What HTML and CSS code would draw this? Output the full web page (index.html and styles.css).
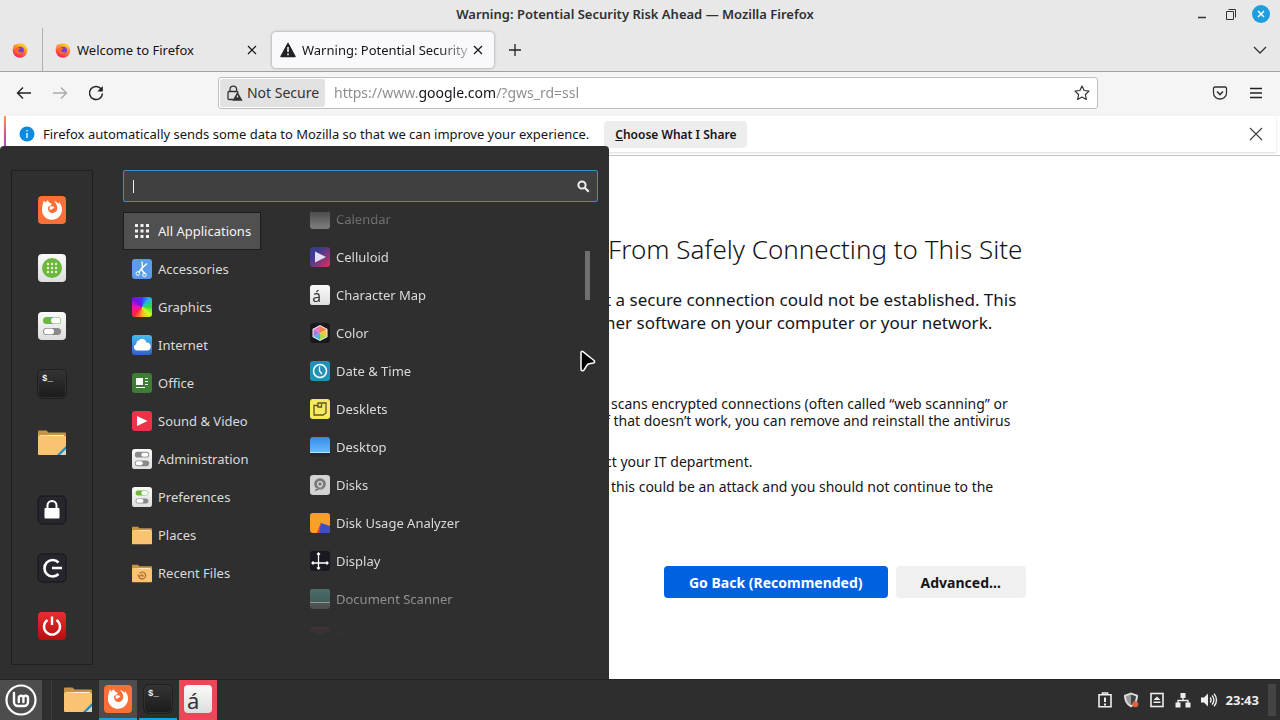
FILE: index.html
```html
<!DOCTYPE html>
<html lang="en">
  <head>
    <meta charset="UTF-8" />
    <meta name="viewport" content="width=device-width, initial-scale=1.0" />
    <title>Warning: Potential Security Risk Ahead — Mozilla Firefox</title>
    <link rel="stylesheet" href="styles.css">
  </head>
  <body>
    <svg class="sprite" width="0" height="0" aria-hidden="true">
      <defs>
        <linearGradient id="flame" x1="0.8" y1="0" x2="0.3" y2="1">
          <stop offset="0" stop-color="#ffe23e" />
          <stop offset="0.45" stop-color="#ff8a1f" />
          <stop offset="1" stop-color="#f5156c" />
        </linearGradient>
        <linearGradient id="white" x1="0" y1="0" x2="0" y2="1">
          <stop offset="0" stop-color="#fafafa" />
          <stop offset="1" stop-color="#dedede" />
        </linearGradient>
        <linearGradient id="dark" x1="0" y1="0" x2="0" y2="1">
          <stop offset="0" stop-color="#333333" />
          <stop offset="1" stop-color="#1c1c1c" />
        </linearGradient>
        <linearGradient id="sky" x1="0" y1="0" x2="0" y2="1">
          <stop offset="0" stop-color="#3689e6" />
          <stop offset="1" stop-color="#64baff" />
        </linearGradient>
        <linearGradient id="cloudsky" x1="0" y1="0" x2="0" y2="1">
          <stop offset="0" stop-color="#46bdf0" />
          <stop offset="1" stop-color="#2f62c8" />
        </linearGradient>
        <linearGradient id="film" x1="0" y1="0" x2="1" y2="1">
          <stop offset="0.3" stop-color="#3b3c96" />
          <stop offset="1" stop-color="#d8305c" />
        </linearGradient>
        <linearGradient id="red" x1="0" y1="0" x2="0" y2="1">
          <stop offset="0" stop-color="#e63030" />
          <stop offset="1" stop-color="#b80d10" />
        </linearGradient>
      </defs>
      <symbol id="ff-logo" viewBox="0 0 16 16">
        <circle cx="8" cy="8.500" r="7.300" fill="url(#flame)" />
        <path d="M10.500 0.300c0.500 2 4.700 3.500 4.800 8.200 0-1.500-2-4-4-5z" fill="#ffd83a" />
        <path d="M0.800 7C1 4.500 2 3 3 2l0.500 1.600 2.500 0.400z" fill="#ff8a3b" />
        <circle cx="8.300" cy="8.300" r="3.600" fill="#7a3fd0" />
        <path d="M3.500 6.500c2-1.500 3.500-0.500 5 0.200-1.600 0.300-1.500 1.300-2.500 1.700 0.500 2 3 2.500 5 0.800-0.800 2.800-3.500 3.600-5.500 2.600S3 8.500 3.500 6.500z" fill="#ff6a2b" />
      </symbol>
      <symbol id="close" viewBox="0 0 16 16">
        <path d="M4 4l8 8M12 4l-8 8" fill="none" stroke="currentColor" stroke-width="1.200" />
      </symbol>
      <symbol id="firefox" viewBox="0 0 28 28">
        <rect width="28" height="28" rx="4" fill="#f96f37" />
        <path d="M5 7.500C5 6.500 5.500 5.500 6 4.500l1.500 2.300C8 5.800 9.200 4.800 10 4c0 1.500 1 2.500 2 3l2 1-2 2c-1.500 0.200-2 1-2 2.500 0 2.600 2 4.500 4.300 4.500 3 0 5-2.200 5-5 0-3-1.500-5-3.300-7 2 0.500 3.500 1.500 4.500 3l0.500-2c2.200 2.500 3.200 5.300 3 8-0.300 5.500-4.500 9.800-10 9.800S4 19.500 4 14.200c0-2.500 0.300-4.800 1-6.700z" fill="#fff" />
        <path d="M12 10.500c1.500-0.500 2.500 0.500 4.500 0.500-1 1.500-2 1.500-3 2.500-1 0.800-2 0-2-1z" fill="#fff" />
      </symbol>
      <symbol id="apps" viewBox="0 0 28 28">
        <rect width="28" height="28" rx="4" fill="url(#white)" />
        <circle cx="14" cy="14" r="10" fill="#6cb83b" />
        <g fill="#e9f5df">
          <circle cx="10" cy="10" r="1.200" /><circle cx="14" cy="10" r="1.200" /><circle cx="18" cy="10" r="1.200" />
          <circle cx="10" cy="14" r="1.200" /><circle cx="14" cy="14" r="1.200" /><circle cx="18" cy="14" r="1.200" />
          <circle cx="10" cy="18" r="1.200" /><circle cx="14" cy="18" r="1.200" /><circle cx="18" cy="18" r="1.200" />
        </g>
      </symbol>
      <symbol id="settings" viewBox="0 0 28 28">
        <rect width="28" height="28" rx="4" fill="url(#white)" />
        <rect x="5" y="5" width="18" height="7" rx="3.500" fill="#6cb83b" />
        <rect x="13" y="5.500" width="9.500" height="6" rx="3" fill="#fff" />
        <rect x="5" y="16" width="18" height="7" rx="3.500" fill="#8a8a8a" />
        <rect x="6" y="16.800" width="10" height="5.400" rx="2.700" fill="#fff" />
      </symbol>
      <symbol id="admin" viewBox="0 0 28 28">
        <rect width="28" height="28" rx="4" fill="url(#white)" />
        <rect x="4" y="4" width="20" height="8" rx="4" fill="#8a8a8a" />
        <rect x="13" y="5.200" width="9.800" height="5.600" rx="2.800" fill="#fff" />
        <rect x="4" y="16" width="20" height="8" rx="4" fill="#8a8a8a" />
        <rect x="5.200" y="17.200" width="9.800" height="5.600" rx="2.800" fill="#fff" />
      </symbol>
      <symbol id="terminal" viewBox="0 0 28 28">
        <rect x="-0.500" y="-0.500" width="29" height="29" rx="5" fill="#111" />
        <rect x="0.500" y="0.500" width="27" height="27" rx="4" fill="url(#dark)" stroke="#484848" stroke-width="0.500" />
        <text x="4" y="10.500" font-family="Liberation Mono, monospace" font-size="9" font-weight="700" fill="#eee">$_</text>
      </symbol>
      <symbol id="folder" viewBox="0 0 28 28">
        <path d="M0 3.500a1 1 0 0 1 1-1h7.500l2 2H27a1 1 0 0 1 1 1V14H0z" fill="#c69345" />
        <path d="M2 7h24v4H2z" fill="#fff0d6" />
        <path d="M0 8.500a1 1 0 0 1 1-1h8L11 8h16a1 1 0 0 1 1 1v17a1 1 0 0 1-1 1H1a1 1 0 0 1-1-1z" fill="#f9c372" />
      </symbol>
      <symbol id="home" viewBox="0 0 28 28">
        <use href="#folder" width="28" height="28" />
        <path d="M19 27l9-9v8a1 1 0 0 1-1 1z" fill="#d5d5c4" />
        <path d="M19 27l9-9v3l-6 6z" fill="#1f87c0" />
      </symbol>
      <symbol id="recent" viewBox="0 0 28 28">
        <use href="#folder" width="28" height="28" />
        <path d="M10.500 14.500a4.800 4.800 0 1 1-1 3.500M8 16l1.700 3 2.800-2M14 15v3h2.500" fill="none" stroke="#a8682c" stroke-width="1.600" />
      </symbol>
      <symbol id="lock" viewBox="0 0 28 28">
        <rect x="-0.500" y="-0.500" width="29" height="29" rx="5" fill="#15151a" />
        <rect x="0.500" y="0.500" width="27" height="27" rx="4" fill="#27262d" />
        <path d="M9.500 13V9.500a4.500 4.500 0 0 1 9 0V13" fill="none" stroke="#fff" stroke-width="2" />
        <rect x="6.500" y="12" width="15" height="10.500" rx="1" fill="#fff" />
      </symbol>
      <symbol id="logout" viewBox="0 0 28 28">
        <rect x="-0.500" y="-0.500" width="29" height="29" rx="5" fill="#15151a" />
        <rect x="0.500" y="0.500" width="27" height="27" rx="4" fill="#27262d" />
        <path d="M20.500 8.500a8.200 8.200 0 1 0 0 11.500M14 14h10" fill="none" stroke="#fff" stroke-width="2.600" />
      </symbol>
      <symbol id="power" viewBox="0 0 28 28">
        <rect width="28" height="28" rx="4" fill="url(#red)" />
        <path d="M9.500 8a8 8 0 1 0 9 0M14 4.500v8.500" fill="none" stroke="#fff" stroke-width="2.400" />
      </symbol>
      <symbol id="charmap" viewBox="0 0 28 28">
        <rect width="28" height="28" rx="4" fill="url(#white)" />
        <text x="3" y="24" font-family="Noto Sans, sans-serif" font-size="22" fill="#333">á</text>
      </symbol>
      <symbol id="grid" viewBox="0 0 20 20">
        <path d="M3 3h3v3H3zM8.500 3h3v3h-3zM14 3h3v3h-3zM3 8.500h3v3H3zM8.500 8.500h3v3h-3zM14 8.500h3v3h-3zM3 14h3v3H3zM8.500 14h3v3h-3zM14 14h3v3h-3z" fill="#f2f2f2" />
      </symbol>
      <symbol id="accessories" viewBox="0 0 20 20">
        <rect width="20" height="20" rx="3" fill="#5b9cec" />
        <path d="M10 2.500L10.500 9l-4 4.500M15 4.500L9 10l4 5" stroke="#fff" stroke-width="1.400" fill="none" />
        <circle cx="5.800" cy="14.500" r="1.800" fill="none" stroke="#fff" />
        <circle cx="12.500" cy="15.800" r="1.800" fill="none" stroke="#fff" />
      </symbol>
      <symbol id="internet" viewBox="0 0 20 20">
        <rect width="20" height="20" rx="3" fill="url(#cloudsky)" />
        <path d="M5 15.500a3.200 3.200 0 0 1-0.600-6.300A3.600 3.600 0 0 1 7 5.200a4.200 4.200 0 0 1 7.300 2.300A4 4 0 0 1 15 15.500z" fill="#fff" />
      </symbol>
      <symbol id="office" viewBox="0 0 20 20">
        <rect width="20" height="20" rx="3" fill="#3d7d34" />
        <path d="M4 5h7v7H4zM13 5h3v1h-3zM13 8h3v1h-3zM13 11h3v1h-3zM4 14h9v1H4z" fill="#fff" />
      </symbol>
      <symbol id="video" viewBox="0 0 20 20">
        <rect width="20" height="20" rx="3" fill="#ee3148" />
        <path d="M5 5l10.500 5L5 15z" fill="#fff" />
      </symbol>
      <symbol id="calendar" viewBox="0 0 20 20">
        <rect width="20" height="20" rx="3" fill="#c8c8c8" />
      </symbol>
      <symbol id="celluloid" viewBox="0 0 20 20">
        <rect width="20" height="20" rx="3" fill="url(#film)" />
        <path d="M5 4.500L16 10 5 15.500z" fill="#e5e0f4" />
      </symbol>
      <symbol id="color" viewBox="0 0 20 20">
        <rect width="20" height="20" rx="3" fill="#19181e" />
        <path d="M10 2l7.500 4v8L10 18l-7.500-4V6z" fill="#f4f4f4" />
        <path d="M10 10V3L3.500 6.500z" fill="#ef77b9" /><path d="M10 10V3l6.500 3.500z" fill="#f3824c" />
        <path d="M10 10l6.500-3.500v7z" fill="#f7c63f" /><path d="M10 10l6.500 3.500L10 17z" fill="#a9d94b" />
        <path d="M10 10v7l-6.500-3.500z" fill="#54b5dc" /><path d="M10 10l-6.500 3.500v-7z" fill="#a775dd" />
      </symbol>
      <symbol id="clock" viewBox="0 0 20 20">
        <rect width="20" height="20" rx="3" fill="#2390b8" />
        <circle cx="10" cy="10" r="6.500" fill="none" stroke="#fff" stroke-width="1.500" />
        <path d="M9.500 5.500V10l2.500 3" fill="none" stroke="#fff" stroke-width="1.300" />
      </symbol>
      <symbol id="desklets" viewBox="0 0 20 20">
        <rect width="20" height="20" rx="3" fill="#f7ea62" />
        <path d="M4 6.500h4V4h8v10l-3 2H4zM8 4v4h3.500V5" fill="none" stroke="#5c5627" stroke-width="1.300" />
      </symbol>
      <symbol id="desktop" viewBox="0 0 20 20">
        <rect width="20" height="20" rx="3" fill="#232a2f" />
        <path d="M0 3a3 3 0 0 1 3-3h14a3 3 0 0 1 3 3v12H0z" fill="url(#sky)" />
        <path d="M0 15h20v1H0z" fill="#bfe0fa" />
      </symbol>
      <symbol id="disks" viewBox="0 0 20 20">
        <rect width="20" height="20" rx="3" fill="#d2d2d2" />
        <circle cx="10" cy="9" r="5.800" fill="#777" />
        <circle cx="10" cy="9" r="3" fill="#ddd" />
        <circle cx="10" cy="9" r="1.800" fill="#777" />
        <path d="M4 17l2-3 5-2-1 2z" fill="#555" stroke="#ddd" stroke-width="0.500" />
      </symbol>
      <symbol id="usage" viewBox="0 0 20 20">
        <rect width="20" height="20" rx="3" fill="#f9a02c" />
        <path d="M11 10l-4 10h10a3 3 0 0 0 3-3v-4z" fill="#3c50c4" />
        <path d="M11 10L7 20h2.500z" fill="#e23b52" />
      </symbol>
      <symbol id="display" viewBox="0 0 20 20">
        <rect width="20" height="20" rx="3" fill="#1a191f" />
        <path d="M8.500 2v16M2 12h16M7 3.500L8.500 2 10 3.500M7 16.500L8.500 18l1.500-1.500M3.500 10.500L2 12l1.500 1.500M16.500 10.500L18 12l-1.500 1.500" fill="none" stroke="#fff" stroke-width="1.300" />
      </symbol>
      <symbol id="scanner" viewBox="0 0 20 20">
        <rect width="20" height="20" rx="3" fill="#6f7776" />
        <path d="M0 3a3 3 0 0 1 3-3h14a3 3 0 0 1 3 3v10H0z" fill="#568580" />
        <path d="M0 13h20v1H0z" fill="#e4fff6" />
      </symbol>
      <symbol id="viewer" viewBox="0 0 20 20">
        <rect width="20" height="20" rx="3" fill="#a5544a" />
        <path d="M10 4l5 6H5z" fill="#ddd" />
      </symbol>
    </svg>

    <div class="desktop">
      <main class="browser">
        <header class="titlebar">
          <span class="window-title">Warning: Potential Security Risk Ahead — Mozilla Firefox</span>
          <div class="window-buttons">
            <button aria-label="Minimize"><svg width="16" height="16"><path d="M4 11.500h8" stroke="#333" stroke-width="1.500" /></svg></button>
            <button aria-label="Restore"><svg width="16" height="16" fill="none" stroke="#333"><path d="M3.500 5.500h7v8h-7zM5.500 3.500h7v8" /></svg></button>
            <button class="window-close" aria-label="Close"><svg width="18" height="18"><path d="M6 6l6 6M12 6l-6 6" stroke="#fff" stroke-width="1.500" /></svg></button>
          </div>
        </header>

        <nav class="tabs">
          <button class="tab-pinned" aria-label="Firefox View"><svg width="16" height="16"><use href="#ff-logo" /></svg></button>
          <div class="tab">
            <svg width="16" height="16"><use href="#ff-logo" /></svg>
            <span class="tab-title">Welcome to Firefox</span>
            <button aria-label="Close tab"><svg width="16" height="16"><use href="#close" /></svg></button>
          </div>
          <div class="tab active">
            <svg width="16" height="16"><path d="M8 1.500L15 14.500H1z" fill="#222" stroke="#222" stroke-width="1.500" stroke-linejoin="round" /><path d="M8 5v5M8 11.500v1.700" stroke="#fff" stroke-width="1.500" /></svg>
            <span class="tab-title fade">Warning: Potential Security</span>
            <button aria-label="Close tab"><svg width="16" height="16"><use href="#close" /></svg></button>
          </div>
          <button class="tab-new" aria-label="New tab"><svg width="16" height="16"><path d="M8 2v12M2 8h12" stroke="#222" stroke-width="1.300" /></svg></button>
          <button class="tab-list" aria-label="List all tabs"><svg width="16" height="16"><path d="M2 5l6 6 6-6" fill="none" stroke="#333" stroke-width="1.300" /></svg></button>
        </nav>

        <div class="toolbar">
          <div class="nav-buttons">
            <button aria-label="Back"><svg width="16" height="16" fill="none" stroke="#222" stroke-width="1.400"><path d="M15 8H2M7 2.500L1.500 8 7 13.500" /></svg></button>
            <button aria-label="Forward"><svg width="16" height="16" fill="none" stroke="#aaa" stroke-width="1.400"><path d="M1 8h13M9 2.500L14.500 8 9 13.500" /></svg></button>
            <button aria-label="Reload"><svg width="16" height="16" fill="none" stroke="#222" stroke-width="1.500"><path d="M13.500 4.500A6.500 6.500 0 1 0 14.500 8.500" /><path d="M14.800 1v5.500H9.300z" fill="#222" stroke="none" /></svg></button>
          </div>
          <div class="urlbar">
            <button class="identity">
              <svg width="16" height="16" fill="none" stroke="#333" stroke-width="1.300"><path d="M4 7V4.500a3.300 3.300 0 0 1 6.600 0V7M7 14.500H3a1 1 0 0 1-1-1v-6a1 1 0 0 1 1-1h8l1.500 1" /><path d="M11.500 8L15.500 15h-8z" fill="#333" /><path d="M11.500 10.500v2" stroke="#e2e2e2" /></svg>
              Not Secure
            </button>
            <input class="url" type="text" aria-label="Address" value="https://www.google.com/?gws_rd=ssl" />
            <button class="star" aria-label="Bookmark this page"><svg width="16" height="16"><path d="M8 1l2.100 4.500 4.900 0.600-3.600 3.400 0.900 5L8 12.100 3.700 14.500l0.900-5L1 6.100l4.900-0.600z" fill="none" stroke="#333" stroke-width="1.200" stroke-linejoin="round" /></svg></button>
          </div>
          <div class="tools">
            <button aria-label="Save to Pocket"><svg width="16" height="16" fill="none" stroke="#333" stroke-width="1.300"><path d="M3 2h10a1.500 1.500 0 0 1 1.500 1.500V8a6.500 6 0 0 1-13 0V3.500A1.500 1.500 0 0 1 3 2z" /><path d="M5 6.500l3 3 3-3" stroke-width="1.600" /></svg></button>
            <button aria-label="Open application menu"><svg width="16" height="16"><path d="M2 3.500h12M2 8h12M2 12.500h12" stroke="#222" stroke-width="1.300" /></svg></button>
          </div>
        </div>

        <div class="notice">
          <svg width="16" height="16"><circle cx="8" cy="8" r="7.500" fill="#0a8ae0" /><path d="M8 7v5M8 4v1.500" stroke="#fff" stroke-width="1.300" /></svg>
          <span class="notice-text">Firefox automatically sends some data to Mozilla so that we can improve your experience.</span>
          <button class="notice-choose"><u>C</u>hoose What I Share</button>
          <button class="notice-close" aria-label="Dismiss"><svg width="16" height="16"><path d="M2 2l12 12M14 2L2 14" stroke="#444" stroke-width="1.200" /></svg></button>
        </div>

        <section class="page">
          <div class="error-page">
            <h1>From Safely Connecting to This Site</h1>
            <p class="lead">t a secure connection could not be established. This<br />her software on your computer or your network.</p>
            <ul>
              <li class="inset">scans encrypted connections (often called “web scanning” or<br />f that doesn’t work, you can remove and reinstall the antivirus</li>
              <li>ct your IT department.</li>
              <li class="inset">this could be an attack and you should not continue to the</li>
            </ul>
            <div class="actions">
              <button class="primary">Go Back (Recommended)</button>
              <button>Advanced…</button>
            </div>
          </div>
        </section>
      </main>

      <footer class="panel">
        <button class="start" aria-label="Menu">
          <svg width="32" height="32" fill="none" stroke="#fff"><circle cx="16" cy="16" r="14.500" stroke-width="2.200" /><path d="M9 9v9a4 4 0 0 0 4 4h6a4 4 0 0 0 4-4v-4a2.300 2.300 0 0 0-4.600 0v4M18.400 14a2.300 2.300 0 0 0-4.600 0v4" stroke-width="2.400" stroke-linecap="round" /></svg>
        </button>
        <div class="tasks">
          <button class="task launcher" aria-label="Files"><svg width="28" height="28"><use href="#home" /></svg></button>
          <button class="task running focused" aria-label="Firefox"><svg width="28" height="28"><use href="#firefox" /></svg></button>
          <button class="task running" aria-label="Terminal"><svg width="28" height="28"><use href="#terminal" /></svg></button>
          <button class="task alert" aria-label="Character Map"><svg width="28" height="28"><use href="#charmap" /></svg></button>
        </div>
        <div class="tray">
          <svg width="16" height="16" fill="none" stroke="#eee" stroke-width="1.600"><path d="M2 2.800h12v12H2zM5.500 3V1h5v2" /><path d="M8 5.500v4.500M8 11.500v2" stroke-width="2" /></svg>
          <svg width="16" height="16"><path d="M8 0.500l7 2.500c0 6-2 9.500-7 12.500C3 12.500 1 9 1 3z" fill="#ddd" /><path d="M8 2.500l5 1.800c-0.200 4-1.500 6.700-5 9z" fill="#444" /><path d="M8 2.500L3 4.300c0.200 4 1.500 6.700 5 9z" fill="#999" /><circle cx="12.300" cy="12.300" r="3" fill="#e0623e" /></svg>
          <svg width="16" height="16"><rect x="2" y="1.500" width="12" height="13" fill="none" stroke="#eee" stroke-width="1.600" /><path d="M8 4.500l3.500 3.500h-7zM4.500 9.500h7V11h-7z" fill="#eee" /></svg>
          <svg width="16" height="16"><path d="M5.500 1h5v5h-5zM0.500 10.500h5v5h-5zM10.500 10.500h5v5h-5z" fill="#eee" /><path d="M8 6v2.500M3 11V8.500h10V11" fill="none" stroke="#eee" stroke-width="1.300" /></svg>
          <svg width="16" height="16"><path d="M0 5.500h3l4-4v13l-4-4H0z" fill="#eee" /><path d="M9 5.500a3.500 3.500 0 0 1 0 5M11 3.500a6.400 6.400 0 0 1 0 9M13 1.800a9 9 0 0 1 0 12.400" fill="none" stroke="#eee" stroke-width="1.400" /></svg>
        </div>
        <time class="clock">23:43</time>
        <button class="show-desktop" aria-label="Show desktop"></button>
      </footer>

      <aside class="menu">
        <div class="favorites">
          <button aria-label="Firefox"><svg width="28" height="28"><use href="#firefox" /></svg></button>
          <button aria-label="Software Manager"><svg width="28" height="28"><use href="#apps" /></svg></button>
          <button aria-label="System Settings"><svg width="28" height="28"><use href="#settings" /></svg></button>
          <button aria-label="Terminal"><svg width="28" height="28"><use href="#terminal" /></svg></button>
          <button aria-label="Files"><svg width="28" height="28"><use href="#home" /></svg></button>
          <button class="session" aria-label="Lock screen"><svg width="28" height="28"><use href="#lock" /></svg></button>
          <button aria-label="Log out"><svg width="28" height="28"><use href="#logout" /></svg></button>
          <button aria-label="Quit"><svg width="28" height="28"><use href="#power" /></svg></button>
        </div>

        <div class="menu-main">
          <label class="search">
            <span class="caret"></span>
            <input type="text" aria-label="Search applications" />
            <svg width="14" height="14" fill="none" stroke="#eee"><circle cx="6" cy="6" r="3.600" stroke-width="2" /><path d="M8.700 8.700l4 4" stroke-width="2.200" /></svg>
          </label>

          <div class="lists">
            <div class="categories">
              <button class="selected"><svg width="20" height="20"><use href="#grid" /></svg>All Applications</button>
              <button><svg width="20" height="20"><use href="#accessories" /></svg>Accessories</button>
              <button><span class="spectrum"></span>Graphics</button>
              <button><svg width="20" height="20"><use href="#internet" /></svg>Internet</button>
              <button><svg width="20" height="20"><use href="#office" /></svg>Office</button>
              <button><svg width="20" height="20"><use href="#video" /></svg>Sound &amp; Video</button>
              <button><svg width="20" height="20"><use href="#admin" /></svg>Administration</button>
              <button><svg width="20" height="20"><use href="#settings" /></svg>Preferences</button>
              <button><svg width="20" height="20"><use href="#folder" /></svg>Places</button>
              <button><svg width="20" height="20"><use href="#recent" /></svg>Recent Files</button>
            </div>

            <div class="applications">
              <div class="app-list">
                <button><svg width="20" height="20"><use href="#calendar" /></svg>Calendar</button>
                <button><svg width="20" height="20"><use href="#celluloid" /></svg>Celluloid</button>
                <button><svg width="20" height="20"><use href="#charmap" /></svg>Character Map</button>
                <button><svg width="20" height="20"><use href="#color" /></svg>Color</button>
                <button><svg width="20" height="20"><use href="#clock" /></svg>Date &amp; Time</button>
                <button><svg width="20" height="20"><use href="#desklets" /></svg>Desklets</button>
                <button><svg width="20" height="20"><use href="#desktop" /></svg>Desktop</button>
                <button><svg width="20" height="20"><use href="#disks" /></svg>Disks</button>
                <button><svg width="20" height="20"><use href="#usage" /></svg>Disk Usage Analyzer</button>
                <button><svg width="20" height="20"><use href="#display" /></svg>Display</button>
                <button><svg width="20" height="20"><use href="#scanner" /></svg>Document Scanner</button>
                <button><svg width="20" height="20"><use href="#viewer" /></svg>Document Viewer</button>
              </div>
            </div>
            <div class="scrollbar"></div>
          </div>
        </div>
      </aside>

      <svg class="pointer" width="20" height="26"><path d="M3 3.500c0-1 1-1.500 2-0.800l11 8.800c1 1 0.600 2.200-0.600 2.500l-4.200 0.800c-1 0.200-1.600 0.600-2.200 1.400L6 21c-1 1.300-3 0.800-3-0.800z" fill="#000" stroke="#fff" stroke-width="1.500" /></svg>
    </div>
  </body>
</html>
```
FILE: styles.css
```css
* {
  box-sizing: border-box;
}

body {
  margin: 0;
  font-family: "Noto Sans", sans-serif;
  font-size: 13px;
  color: #15141a;
}

button {
  display: flex;
  align-items: center;
  justify-content: center;
  padding: 0;
  border: none;
  background: none;
  font: inherit;
  color: inherit;
  white-space: nowrap;
}

input {
  min-width: 0;
  padding: 0;
  border: none;
  outline: none;
  background: none;
  font: inherit;
  color: inherit;
}

svg {
  display: block;
  flex: none;
  overflow: visible;
}

symbol {
  overflow: visible;
}

.sprite {
  position: absolute;
}

.desktop {
  position: relative;
  display: flex;
  flex-direction: column;
  height: 100vh;
  overflow: hidden;
}

.browser {
  flex: 1;
  display: flex;
  flex-direction: column;
  min-height: 0;
  background: #fff;
}

/* window frame */

.titlebar {
  display: grid;
  grid-template-columns: 1fr auto 1fr;
  align-items: center;
  height: 28px;
  padding-right: 10px;
  background: #e8e8e8;
}

.window-title {
  grid-column: 2;
  font-weight: 600;
  color: #303030;
}

.window-buttons {
  display: flex;
  justify-content: flex-end;
  align-items: center;
  gap: 13px;
}

.window-close {
  border-radius: 50%;
  background: #1f9ede;
}

.tabs {
  display: flex;
  align-items: center;
  height: 44px;
  border-bottom: 1px solid #a0a0a0;
  background: #e8e8e8;
}

.tab-pinned {
  width: 43px;
  align-self: stretch;
  padding-right: 2px;
  border-right: 1px solid #b0b0b0;
}

.tab {
  display: flex;
  align-items: center;
  gap: 6px;
  width: 229px;
  height: 36px;
  padding: 0 12px;
}

.tab.active {
  width: 222px;
  padding: 0 8px;
  border-radius: 4px;
  background: #f9f9fb;
  box-shadow: 0 0 3px rgba(0, 0, 0, 0.4);
}

.tab-title {
  flex: 1;
  margin-right: -4px;
  overflow: hidden;
  white-space: nowrap;
}

.fade {
  mask-image: linear-gradient(to right, #000 82%, rgba(0, 0, 0, 0.3));
}

.tab-new {
  margin-left: 13px;
}

.tab-list {
  margin: 0 12px 0 auto;
}

.toolbar {
  display: grid;
  grid-template-columns: 218px 1fr 182px;
  align-items: center;
  height: 44px;
  padding-bottom: 3px;
  background: #f5f5f6;
}

.nav-buttons {
  display: flex;
  gap: 20px;
  padding-left: 16px;
}

.urlbar {
  display: flex;
  align-items: center;
  height: 32px;
  border: 1px solid #bebebf;
  border-radius: 3px;
  background: #fff;
  font-size: 14px;
}

.identity {
  gap: 5px;
  height: 28px;
  width: 105px;
  margin-left: 1px;
  border-radius: 3px;
  background: #e2e2e3;
  color: #333;
}

/* only the domain part of the address is dark */
.url {
  flex: 1;
  margin-left: 9px;
  background: linear-gradient(to right, #8a8a8f 84px, #15141a 84px 162px, #8a8a8f 162px);
  background-clip: text;
  -webkit-background-clip: text;
  color: transparent;
}

.star {
  margin-right: 7px;
}

.tools {
  display: flex;
  justify-content: flex-end;
  gap: 20px;
  padding-right: 16px;
}

.notice {
  display: flex;
  align-items: center;
  height: 36px;
  margin: 0 4px 3px;
  padding: 0 12px 0 13px;
  border-left: 2px solid;
  border-image: linear-gradient(to bottom, #ff9a50, #e0508c, #8a4fd8) 1;
  box-shadow: 0 1px 2px rgba(0, 0, 0, 0.15);
}

.notice-text {
  margin-left: 8px;
  white-space: nowrap;
}

.notice-choose {
  height: 27px;
  margin-left: 15px;
  padding: 0 11px;
  border-radius: 4px;
  background: #ededee;
  font-size: 12px;
  font-weight: 600;
}

.notice-close {
  margin-left: auto;
}

/* certificate error page */

.page {
  flex: 1;
  border-top: 1px solid #c4c4c4;
}

.error-page {
  width: 772px;
  margin: 0 auto;
  padding: 75px 0 0 351px;
  font-size: 14px;
  line-height: 17px;
  white-space: nowrap;
}

.error-page h1 {
  margin: 0;
  font-size: 26px;
  font-weight: 300;
  line-height: 36px;
  text-indent: 3px;
}

.lead {
  margin: 21px 0 0;
  font-size: 17px;
  line-height: 23px;
}

.error-page ul {
  margin: 61px 0 0;
  padding: 0;
  list-style: none;
}

.error-page li {
  margin-bottom: 8px;
}

.error-page li:first-child {
  margin-bottom: 24px;
}

.error-page .inset {
  text-indent: 6px;
}

.actions {
  display: flex;
  justify-content: flex-end;
  gap: 8px;
  margin-top: 71px;
}

.actions button {
  height: 32px;
  padding: 0 25px;
  border-radius: 4px;
  background: #f0f0f1;
  font-weight: 700;
}

.actions .primary {
  background: #0061e0;
  color: #fff;
}

/* bottom panel */

.panel {
  display: flex;
  align-items: center;
  height: 40px;
  box-shadow: 0 -1px 0 #222;
  background: #2e2e2e;
  color: #eee;
}

.start {
  width: 42px;
  height: 100%;
  background: #4d4d4d;
}

.tasks {
  display: flex;
  gap: 2px;
  height: 100%;
  margin-left: 9px;
  padding-left: 7px;
  border-left: 1px solid #3d3d3d;
}

.task {
  width: 38px;
  border-bottom: 2px solid transparent;
}

.task.running {
  border-color: #1f9ede;
}

.task.focused {
  background: #4d4d4d;
}

.task.alert {
  border-color: #ea4858;
  background: #ea4858;
}

.tray {
  display: flex;
  gap: 10px;
  margin-left: auto;
}

.clock {
  margin: 0 9px;
  font-weight: 700;
}

.show-desktop {
  width: 8px;
  height: 32px;
  margin-right: 4px;
  background: #444;
}

/* application menu */

.menu {
  position: absolute;
  left: 0;
  bottom: 40px;
  display: flex;
  gap: 30px;
  width: 609px;
  padding: 24px 11px 14px;
  border-bottom: 1px solid #222;
  border-radius: 4px 4px 0 0;
  background: #2f2f2f;
  color: #dadada;
}

.favorites {
  display: flex;
  flex-direction: column;
  width: 82px;
  padding: 10px 0 9px;
  border: 1px solid #1f1f1f;
}

.favorites button {
  height: 58px;
}

.favorites .session {
  margin-top: 10px;
}

.menu-main {
  flex: 1;
}

.search {
  display: flex;
  align-items: center;
  height: 32px;
  padding: 0 7px 0 9px;
  border: 1px solid #3194c4;
  border-radius: 2px;
  background: #404040;
}

.search input {
  flex: 1;
}

.caret {
  width: 1px;
  height: 13px;
  background: #eee;
}

.lists {
  display: flex;
  height: 424px;
  margin-top: 10px;
}

.categories {
  width: 138px;
}

.categories button,
.app-list button {
  justify-content: flex-start;
  gap: 6px;
  width: 100%;
  height: 38px;
  padding-left: 8px;
  border: 1px solid transparent;
}

.categories .selected {
  border-color: #1c1c1c;
  background: #505050;
  color: #f5f5f5;
}

.spectrum {
  width: 20px;
  height: 20px;
  border-radius: 3px;
  background: conic-gradient(#43f 0deg, #2bd 45deg, #3d3 90deg, #cf2 135deg, #fa2 180deg, #f24 225deg, #e1b 270deg, #71d 315deg, #43f 360deg);
}

.applications {
  flex: 1;
  margin-left: 40px;
  overflow: hidden;
  mask-image: linear-gradient(to bottom, rgba(0, 0, 0, 0.2), #000 42px, #000 360px, transparent);
}

.app-list {
  margin-top: -12px;
}

.scrollbar {
  width: 5px;
  height: 49px;
  margin: 39px 8px 0 0;
  background: #707070;
}

.pointer {
  position: absolute;
  left: 578px;
  top: 349px;
}
```
